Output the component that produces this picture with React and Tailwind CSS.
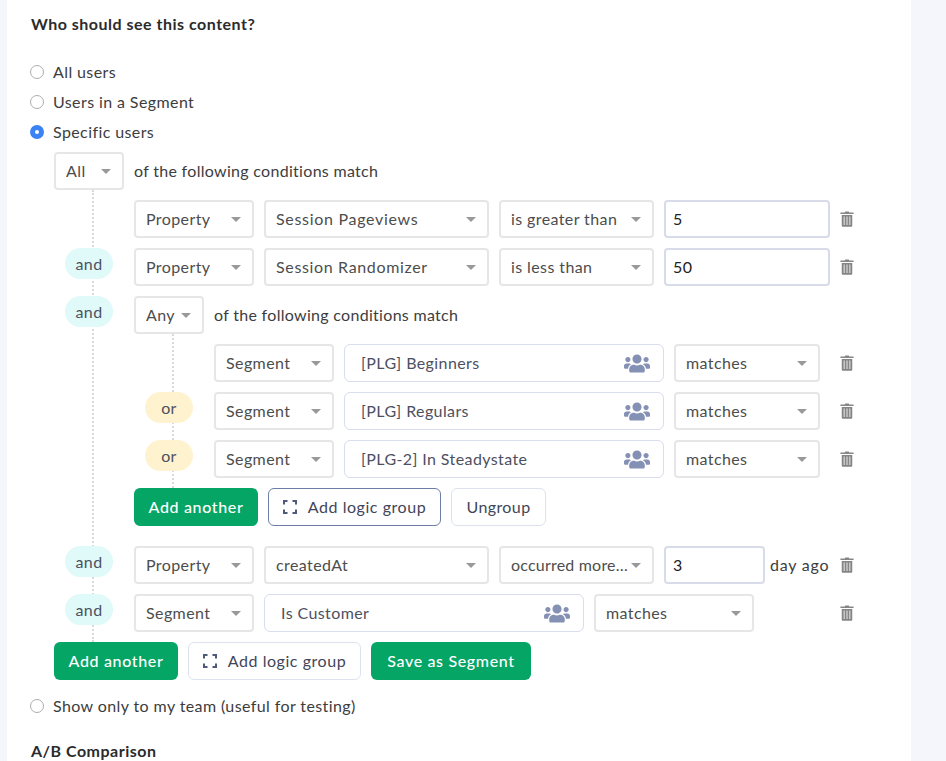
import { FaUsers } from "react-icons/fa";

function Radio({ label, checked }) {
  return (
    <label className="flex h-[30px] items-center gap-[9px] -ml-px">
      {checked ? (
        <span className="flex h-[14px] w-[14px] items-center justify-center rounded-full bg-[#3b82f6]">
          <span className="h-1 w-1 rounded-full bg-white" />
        </span>
      ) : (
        <span className="h-[14px] w-[14px] rounded-full border border-[#adadad] bg-white" />
      )}
      <span>{label}</span>
    </label>
  );
}

function Select({ value, width, tracking = "" }) {
  return (
    <div className={`flex h-[38px] shrink-0 items-center justify-between rounded border-2 border-[#e6e6e6] bg-white pl-[10px] pr-[11px] text-[#4d4d4d] ${width}`}>
      <span className={`truncate ${tracking}`}>{value}</span>
      <span className="h-0 w-0 shrink-0 border-x-[5px] border-t-[5px] border-x-transparent border-t-[#999999]" />
    </div>
  );
}

function NumberInput({ value, width }) {
  return (
    <div className={`flex h-[38px] shrink-0 items-center rounded border-2 border-[#d8dcea] bg-white pl-[7px] text-[#222222] ${width}`}>
      {value}
    </div>
  );
}

function SegmentInput({ value }) {
  return (
    <div className="flex h-[38px] w-[320px] shrink-0 items-center justify-between rounded-md border border-[#d8deec] bg-white pl-4 pr-[13px] text-[#4d5060]">
      <span>{value}</span>
      <FaUsers className="h-[21px] w-[26px] text-[#8490b4]" />
    </div>
  );
}

function Trash() {
  return (
    <svg viewBox="0 0 16 16" preserveAspectRatio="none" className="ml-auto mr-px h-4 w-[14px] shrink-0" fill="#858585">
      <path d="M5.5 1.5 6 .5h4l.5 1H15.5v1.5H.5V1.5z" />
      <path d="M2 4h12v10.5a1.2 1.2 0 0 1-1.2 1.2H3.2A1.2 1.2 0 0 1 2 14.5z" />
      <path fill="#c9c9c9" d="M4 5.5h1.7V14H4zM7.15 5.5h1.7V14h-1.7zM10.3 5.5H12V14h-1.7z" />
    </svg>
  );
}

function Pill({ type }) {
  if (!type) return <div className="w-20 shrink-0" />;
  const color = type === "and" ? "bg-[#e0f9f9]" : "bg-[#fff3cf]";
  return (
    <div className="w-20 shrink-0">
      <div className={`relative ml-[11px] flex h-[31px] w-12 items-center justify-center rounded-full text-[#4d5060] ${color}`}>
        {type}
      </div>
    </div>
  );
}

function Row({ connector, children }) {
  return (
    <div className="flex">
      <Pill type={connector} />
      <div className="flex flex-1 items-center gap-2.5">{children}</div>
    </div>
  );
}

function GreenButton({ children, width }) {
  return (
    <button className={`h-[38px] rounded-md bg-[#05a566] font-medium tracking-[0.65px] text-white ${width}`}>{children}</button>
  );
}

function LogicButton({ dark }) {
  return (
    <button className={`flex h-[38px] w-[173px] items-center justify-center gap-[11px] rounded-md border bg-white tracking-[0.55px] text-[#3f4659] ${dark ? "border-[#6f7ea6]" : "border-[#dde2ee]"}`}>
      <svg viewBox="0 0 14 14" className="h-[14px] w-[14px]" fill="none" stroke="#4d5a7c" strokeWidth="2">
        <path d="M1 4.5V1h3.5M9.5 1H13v3.5M13 9.5V13H9.5M4.5 13H1V9.5" />
      </svg>
      Add logic group
    </button>
  );
}

function DottedLine() {
  return <div className="absolute bottom-[38px] left-[38px] top-[38px] border-l-2 border-dotted border-[#d9d9d9]" />;
}

export default function App() {
  return (
    <div className="h-[761px] w-[946px] overflow-hidden bg-[#f4f6fb] text-[16px] tracking-[0.4px] text-[#3d3d3d]" style={{ fontFamily: "Lato, sans-serif" }}>
      <div className="ml-[7px] h-full w-[904px] bg-white pl-6 pr-14 pt-3">
        <h2 className="mb-[21px] h-6 font-bold leading-6 tracking-[0.5px] text-[#2b2b2b]">Who should see this content?</h2>
        <Radio label="All users" />
        <Radio label="Users in a Segment" />
        <Radio label="Specific users" checked />

        <div className="relative ml-[23px] mt-[5px] flex flex-col gap-2.5">
          <DottedLine />
          <div className="flex items-center gap-2.5">
            <Select value="All" width="w-[70px]" />
            <span className="tracking-[0.3px]">of the following conditions match</span>
          </div>

          <Row>
            <Select value="Property" width="w-[120px]" />
            <Select value="Session Pageviews" width="w-[225px]" tracking="tracking-[0.7px]" />
            <Select value="is greater than" width="w-[155px]" />
            <NumberInput value="5" width="w-[166px]" />
            <Trash />
          </Row>
          <Row connector="and">
            <Select value="Property" width="w-[120px]" />
            <Select value="Session Randomizer" width="w-[225px]" tracking="tracking-[0.65px]" />
            <Select value="is less than" width="w-[155px]" />
            <NumberInput value="50" width="w-[166px]" />
            <Trash />
          </Row>

          <div className="mb-2.5 flex">
            <Pill type="and" />
            <div className="relative flex flex-1 flex-col gap-2.5">
              <DottedLine />
              <div className="flex items-center gap-2.5">
                <Select value="Any" width="w-[70px]" />
                <span className="tracking-[0.3px]">of the following conditions match</span>
              </div>
              <Row>
                <Select value="Segment" width="w-[120px]" />
                <SegmentInput value="[PLG] Beginners" />
                <Select value="matches" width="w-[146px]" />
                <Trash />
              </Row>
              <Row connector="or">
                <Select value="Segment" width="w-[120px]" />
                <SegmentInput value="[PLG] Regulars" />
                <Select value="matches" width="w-[146px]" />
                <Trash />
              </Row>
              <Row connector="or">
                <Select value="Segment" width="w-[120px]" />
                <SegmentInput value="[PLG-2] In Steadystate" />
                <Select value="matches" width="w-[146px]" />
                <Trash />
              </Row>
              <div className="relative flex gap-2.5">
                <GreenButton width="w-[124px]">Add another</GreenButton>
                <LogicButton dark />
                <button className="h-[38px] w-[95px] rounded-md border border-[#dde2ee] bg-white text-[#3f4659]">Ungroup</button>
              </div>
            </div>
          </div>

          <Row connector="and">
            <Select value="Property" width="w-[120px]" />
            <Select value="createdAt" width="w-[225px]" />
            <Select value="occurred more than" width="w-[155px]" tracking="tracking-[0.2px]" />
            <NumberInput value="3" width="w-[101px]" />
            <span className="-ml-[5px] tracking-[0.8px]">day ago</span>
            <Trash />
          </Row>
          <Row connector="and">
            <Select value="Segment" width="w-[120px]" />
            <SegmentInput value="Is Customer" />
            <Select value="matches" width="w-[160px]" />
            <Trash />
          </Row>

          <div className="relative flex gap-2.5">
            <GreenButton width="w-[124px]">Add another</GreenButton>
            <LogicButton />
            <GreenButton width="w-[160px]">Save as Segment</GreenButton>
          </div>
        </div>

        <div className="mt-[11px]">
          <Radio label="Show only to my team (useful for testing)" />
        </div>
        <h2 className="mt-[18px] h-6 font-bold leading-6 tracking-[0.5px] text-[#2b2b2b]">A/B Comparison</h2>
      </div>
    </div>
  );
}
